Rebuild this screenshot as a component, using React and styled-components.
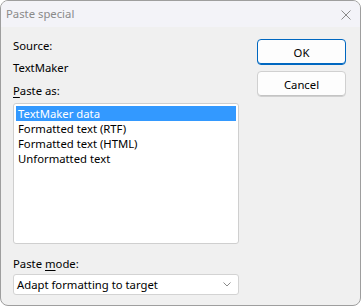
import React from 'react';
import styled, { createGlobalStyle } from 'styled-components';

const GlobalStyle = createGlobalStyle`
  html, body {
    margin: 0;
    padding: 0;
    background: #ffffff;
  }
  body {
    font-family: 'Noto Sans', 'Open Sans', sans-serif;
    font-size: 11.3px;
    color: #000;
  }
`;

const Window = styled.div`
  width: 361px;
  height: 306px;
  box-sizing: border-box;
  border: 1px solid #9e9e9e;
  border-radius: 8px;
  overflow: hidden;
  display: flex;
  flex-direction: column;
  background: #f0f0f0;
`;

const TitleBar = styled.div`
  height: 26px;
  flex-shrink: 0;
  display: flex;
  align-items: center;
  justify-content: space-between;
  padding: 0 9px 0 5px;
  background: #f3f3f8;
`;

const Title = styled.span`
  color: #8a8a8a;
  line-height: 16px;
`;

const CloseIcon = styled.svg`
  width: 10px;
  height: 10px;
  display: block;
  margin-top: 1px;
`;

const Body = styled.div`
  flex: 1;
  display: flex;
  padding: 0 0 0 12px;
`;

const LeftColumn = styled.div`
  width: 226px;
  display: flex;
  flex-direction: column;
  padding-top: 11px;
`;

const Label = styled.div`
  line-height: 16px;
  height: 16px;
  margin-bottom: ${p => p.$gap || 0}px;
  white-space: nowrap;

  u {
    text-decoration: underline;
    text-underline-offset: 2px;
  }
`;

const ListBox = styled.div`
  height: 141px;
  box-sizing: border-box;
  border: 1px solid #cfcfcf;
  border-radius: 3px;
  background: #ffffff;
  padding: 2px;
  margin-bottom: 12px;
`;

const ListItem = styled.div`
  height: 15px;
  line-height: 15px;
  padding-left: 2px;
  white-space: nowrap;
  background: ${p => (p.$selected ? '#3399ff' : 'transparent')};
  color: ${p => (p.$selected ? '#ffffff' : '#000000')};
`;

const Select = styled.div`
  height: 21px;
  box-sizing: border-box;
  border: 1px solid #d3d3d3;
  border-radius: 3px;
  background: #ffffff;
  display: flex;
  align-items: center;
  justify-content: space-between;
  padding: 0 7px 0 3px;
  margin-top: 2px;
`;

const Chevron = styled.svg`
  width: 8px;
  height: 5px;
  display: block;
`;

const ButtonColumn = styled.div`
  display: flex;
  flex-direction: column;
  gap: 6px;
  margin-left: 18px;
  padding-top: 12px;
`;

const Button = styled.button`
  width: 89px;
  height: 26px;
  box-sizing: border-box;
  border-radius: 4px;
  font-family: inherit;
  font-size: 11.3px;
  color: #000;
  padding: 0;
  background: #fdfdfd;
  border: 1px solid ${p => (p.$primary ? '#0067c0' : '#d0d0d0')};
  box-shadow: ${p => (p.$primary ? 'inset 0 -1px 0 #0067c0' : 'inset 0 -1px 0 #c4c4c4')};
`;

const items = [
  'TextMaker data',
  'Formatted text (RTF)',
  'Formatted text (HTML)',
  'Unformatted text',
];

export default function App() {
  return (
    <>
      <GlobalStyle />
      <Window>
        <TitleBar>
          <Title>Paste special</Title>
          <CloseIcon viewBox="0 0 10 10">
            <path d="M0.5 0.5 L9.5 9.5 M9.5 0.5 L0.5 9.5" stroke="#8a8a8a" strokeWidth="1" fill="none" />
          </CloseIcon>
        </TitleBar>
        <Body>
          <LeftColumn>
            <Label $gap={6}>Source:</Label>
            <Label $gap={7}>TextMaker</Label>
            <Label $gap={4}><u>P</u>aste as:</Label>
            <ListBox>
              {items.map((item, i) => (
                <ListItem key={item} $selected={i === 0}>{item}</ListItem>
              ))}
            </ListBox>
            <Label>Paste <u>m</u>ode:</Label>
            <Select>
              <span>Adapt formatting to target</span>
              <Chevron viewBox="0 0 8 5">
                <path d="M0.5 0.5 L4 4 L7.5 0.5" stroke="#8a8a8a" strokeWidth="1" fill="none" />
              </Chevron>
            </Select>
          </LeftColumn>
          <ButtonColumn>
            <Button $primary>OK</Button>
            <Button>Cancel</Button>
          </ButtonColumn>
        </Body>
      </Window>
    </>
  );
}
